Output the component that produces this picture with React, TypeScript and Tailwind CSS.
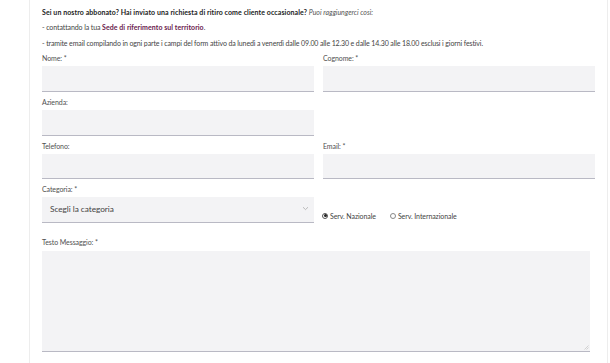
import React from "react";

const Label = ({ children }: { children: React.ReactNode }) => (
  <div className="text-[7px] leading-[8px] text-[#505050] h-[8px] tracking-[-0.08px]">{children}</div>
);

const Input = ({ w = "w-[272px]" }: { w?: string }) => (
  <div className={`${w} h-[25.5px] bg-[#f3f3f5] border-b-[1.5px] border-[#b9b9c4]`} />
);

export default function App() {
  return (
    <div
      className="w-[610px] h-[363px] overflow-hidden bg-white flex"
      style={{ fontFamily: "Lato, 'Liberation Sans', sans-serif" }}
    >
      <div className="ml-[29px] w-[579px] h-full border-x border-[#ededed] pl-[12px] text-[#333]">
        <div className="pt-[8px] text-[7px] leading-[8px]">
          <span className="font-bold text-[#222] tracking-[0.08px]">
            Sei un nostro abbonato? Hai inviato una richiesta di ritiro come cliente occasionale?
          </span>{" "}
          <span className="italic text-[#555]">Puoi raggiungerci così:</span>
        </div>
        <div className="mt-[7px] text-[7px] leading-[8px] text-[#444] tracking-[-0.1px]">
          - contattando la tua{" "}
          <span className="font-bold text-[#6a1b4d] tracking-[0.05px]">Sede di riferimento sul territorio</span>.
        </div>
        <div className="mt-[8px] text-[7px] leading-[8px] text-[#444] tracking-[-0.12px]">
          - tramite email compilando in ogni parte i campi del form attivo da lunedì a venerdì dalle 09.00 alle 12.30 e
          dalle 14.30 alle 18.00 esclusi i giorni festivi.
        </div>

        <div className="mt-[7px] grid grid-cols-[272px_272px] gap-x-[9px]">
          <div className="flex flex-col gap-[4px]">
            <Label>Nome: *</Label>
            <Input />
          </div>
          <div className="flex flex-col gap-[4px]">
            <Label>Cognome: *</Label>
            <Input />
          </div>

          <div className="mt-[6.5px] flex flex-col gap-[4px]">
            <Label>Azienda:</Label>
            <Input />
          </div>
          <div />

          <div className="mt-[6px] flex flex-col gap-[4px]">
            <Label>Telefono:</Label>
            <Input />
          </div>
          <div className="mt-[6px] flex flex-col gap-[4px]">
            <Label>Email: *</Label>
            <Input />
          </div>

          <div className="mt-[6px] flex flex-col gap-[4px]">
            <Label>Categoria: *</Label>
            <div className="w-[272px] h-[25.5px] bg-[#f3f3f5] border-b-[1.5px] border-[#b9b9c4] flex items-center justify-between pl-[8px] pr-[5px]">
              <span className="text-[8.3px] font-normal text-[#444] tracking-[-0.05px]">Scegli la categoria</span>
              <svg width="7" height="5" viewBox="0 0 7 5" className="mt-[-1px]">
                <path d="M1 1.2 L3.5 3.6 L6 1.2" fill="none" stroke="#a0a0a0" strokeWidth="0.7" />
              </svg>
            </div>
          </div>
          <div className="mt-[6px] flex items-end pb-[3px] text-[7px] leading-[8px] text-[#444] tracking-[-0.08px]">
            <div className="flex items-center ml-[-1px]">
              <span className="w-[6px] h-[6px] rounded-full border border-[#555] bg-white flex items-center justify-center">
                <span className="w-[3px] h-[3px] rounded-full bg-[#222]" />
              </span>
              <span className="ml-[2px]">Serv. Nazionale</span>
            </div>
            <div className="flex items-center ml-[14px]">
              <span className="w-[6px] h-[6px] rounded-full border border-[#888] bg-white" />
              <span className="ml-[2px]">Serv. Internazionale</span>
            </div>
          </div>
        </div>

        <div className="mt-[15.5px] flex flex-col gap-[5px]">
          <Label>Testo Messaggio: *</Label>
          <div className="w-[548px] h-[101px] bg-[#f3f3f5] border-b-[1.5px] border-[#b9b9c4] relative">
            <svg width="5" height="5" viewBox="0 0 5 5" className="absolute right-[1px] bottom-[1px]">
              <path d="M0.5 4.5 L4.5 0.5 M2.5 4.5 L4.5 2.5" stroke="#bbb" strokeWidth="0.6" />
            </svg>
          </div>
        </div>
      </div>
    </div>
  );
}
